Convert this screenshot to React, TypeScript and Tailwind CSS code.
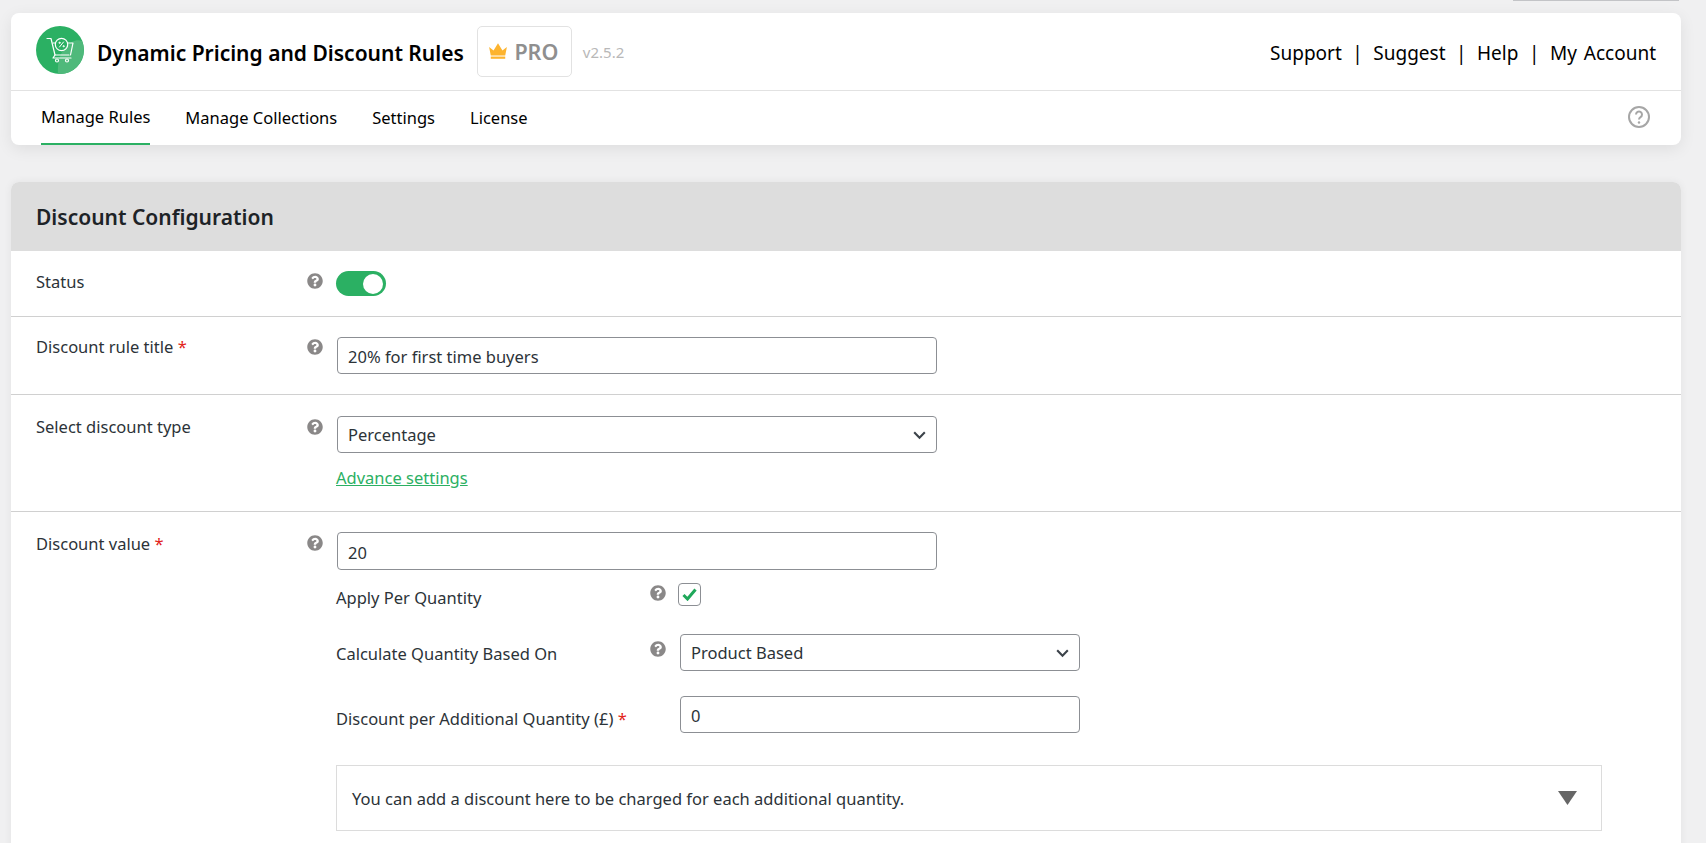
import { FaQuestionCircle } from "react-icons/fa";

function Help() {
  return <FaQuestionCircle className="w-4 h-4 text-[#8a8888] shrink-0" />;
}

function Chevron() {
  return (
    <svg viewBox="0 0 16 16" className="absolute right-[9px] top-1/2 -translate-y-1/2 w-[17px] h-[17px] pointer-events-none">
      <path d="M3 5.5 8 10.5 13 5.5" fill="none" stroke="#3c434a" strokeWidth="2" />
    </svg>
  );
}

function TextBox({ value, className }: { value: string; className: string }) {
  return (
    <input
      readOnly
      value={value}
      className={`border border-[#8c8f94] rounded-[4px] bg-white px-[10px] pt-[2px] text-[16.5px] text-[#2c3338] outline-none ${className}`}
    />
  );
}

function SelectBox({ value, className }: { value: string; className: string }) {
  return (
    <div className={`relative ${className}`}>
      <select className="appearance-none w-full h-full border border-[#8c8f94] rounded-[4px] bg-white pl-[10px] pr-[10px] pt-[2px] text-[16.5px] text-[#2c3338] outline-none">
        <option>{value}</option>
      </select>
      <Chevron />
    </div>
  );
}

function Logo() {
  return (
    <svg viewBox="0 0 48 48" className="w-12 h-12 shrink-0">
      <circle cx="24" cy="24" r="24" fill="#2bb063" />
      <path d="M24 48a24 24 0 0 0 22-33C38 11 20 22 22 48z" fill="#4fb97b" />
      <g fill="none" stroke="#fff" strokeWidth="1.200" strokeLinecap="round" strokeLinejoin="round">
        <path d="M11 12.500h4l4 16.500h14" />
        <path d="M17 17h2M32 17h5l-2.500 12" />
        <path d="M19 29 17 32h18" />
        <circle cx="25.500" cy="18.500" r="6.200" />
        <circle cx="21" cy="34.500" r="1.500" />
        <circle cx="31" cy="34.500" r="1.500" />
        <path d="M23.500 21 27.500 16" strokeWidth="1" />
        <circle cx="23.500" cy="16.800" r=".6" strokeWidth="1" />
        <circle cx="27.500" cy="20.200" r=".6" strokeWidth="1" />
      </g>
    </svg>
  );
}

function Crown() {
  return (
    <svg viewBox="0 0 18 16" className="w-5 h-[18px] shrink-0 mb-[2px]">
      <path d="M1 4.500 5 7.500 9 1l4 6.500 4-3-1.500 7.500h-13z" fill="#fdb42f" />
      <rect x="2.500" y="13" width="13" height="2" fill="#fdb42f" />
    </svg>
  );
}

export default function App() {
  return (
    <div className="h-[843px] overflow-hidden bg-[#f0f0f1] font-['Noto_Sans',sans-serif] text-[16.5px] text-[#2c3338]">
      {/* --- top sliver of the screen options tab --- */}
      <div className="flex justify-end pr-[27px]">
        <div className="w-[166px] h-[1px] bg-[#c3c4c7]" />
      </div>

      <div className="ml-[11px] mr-[25px] mt-[12px] h-[132px] bg-white rounded-[8px] shadow-[0_4px_16px_rgba(0,0,0,0.08)]">
        <div className="h-[78px] border-b border-[#e2e2e2] pl-[25px] pr-[25px] pt-[13px] flex items-start justify-between">
          <div className="flex items-start">
            <Logo />
            <span className="ml-[13px] h-[51px] pt-[4px] flex items-center text-[21px] font-semibold text-black">Dynamic Pricing and Discount Rules</span>
            <div className="ml-[13px] w-[95px] h-[51px] border border-[#e2e2e2] rounded-[5px] pr-[2px] flex items-center justify-center gap-[6px]">
              <Crown />
              <span className="pt-[2px] text-[21.5px] font-semibold text-[#8f8f8f]">PRO</span>
            </div>
            <span className="ml-[11px] h-[51px] pt-[1px] flex items-center text-[15px] text-[#b8b8b8]">v2.5.2</span>
          </div>
          <div className="h-[51px] pt-[3px] flex items-center text-[19px] text-black">
            <span>Support</span>
            <span className="mx-[10.5px]">|</span>
            <span>Suggest</span>
            <span className="mx-[10.5px]">|</span>
            <span>Help</span>
            <span className="mx-[10.5px]">|</span>
            <span className="[word-spacing:2px]">My Account</span>
          </div>
        </div>
        <div className="h-[54px] pl-[30px] pr-[31px] flex items-stretch justify-between text-black">
          <div className="flex gap-[35px]">
            <span className="flex items-center border-b-2 border-[#2bb063]">Manage Rules</span>
            <span className="flex items-center">Manage Collections</span>
            <span className="flex items-center">Settings</span>
            <span className="flex items-center">License</span>
          </div>
          <div className="flex items-center pb-[3px]">
            <svg viewBox="0 0 22 22" className="w-[22px] h-[22px]">
              <circle cx="11" cy="11" r="10" fill="none" stroke="#a6a6a6" strokeWidth="2" />
              <path d="M8 8.500a3 3 0 1 1 4.500 2.600c-1 .6-1.500 1.100-1.500 2.400" fill="none" stroke="#a6a6a6" strokeWidth="2" />
              <circle cx="11" cy="16.500" r="1.200" fill="#a6a6a6" />
            </svg>
          </div>
        </div>
      </div>

      <div className="ml-[11px] mr-[25px] mt-[37px] bg-white rounded-t-[8px] shadow-[0_0_8px_rgba(0,0,0,0.06)]">
        <div className="h-[69px] bg-[#dddddd] rounded-t-[8px] pl-[25px] pt-[2px] flex items-center">
          <h2 className="text-[21px] font-semibold text-[#1d2327]">Discount Configuration</h2>
        </div>

        <div className="h-[66px] border-b border-[#d0d0d0] pl-[25px] flex items-start">
          <span className="w-[271px] pt-[19px]">Status</span>
          <div className="pt-[22px]"><Help /></div>
          <div className="ml-[13px] pt-[20px]">
            <div className="w-[50px] h-[25px] rounded-full bg-[#2bb063] flex items-center justify-end pr-[3px]">
              <div className="w-[20px] h-[20px] rounded-full bg-white" />
            </div>
          </div>
        </div>

        <div className="h-[78px] border-b border-[#d0d0d0] pl-[25px] flex items-start">
          <span className="w-[271px] pt-[18px]">Discount rule title <span className="text-[#e2231a]">*</span></span>
          <div className="pt-[22px]"><Help /></div>
          <TextBox value="20% for first time buyers" className="ml-[14px] mt-[20px] w-[600px] h-[37px]" />
        </div>

        <div className="h-[117px] border-b border-[#d0d0d0] pl-[25px] flex items-start">
          <span className="w-[271px] pt-[20px]">Select discount type</span>
          <div className="pt-[24px]"><Help /></div>
          <div className="ml-[14px] pt-[21px]">
            <SelectBox value="Percentage" className="w-[600px] h-[37px]" />
            <a className="block -ml-[1px] mt-[13px] text-[#2bb063] underline">Advance settings</a>
          </div>
        </div>

        <div className="pl-[25px] pb-[40px] flex items-start">
          <span className="w-[271px] pt-[20px]">Discount value <span className="text-[#e2231a]">*</span></span>
          <div className="pt-[23px]"><Help /></div>
          <div className="ml-[13px] pt-[20px] flex flex-col">
            <TextBox value="20" className="ml-[1px] w-[600px] h-[38px]" />

            <div className="mt-[13px] h-[23px] flex items-start">
              <span className="w-[314px] pt-[3px]">Apply Per Quantity</span>
              <div className="pt-[2px]"><Help /></div>
              <div className="ml-[12px] w-[23px] h-[23px] border border-[#8c8f94] rounded-[4px] flex items-center justify-center">
                <svg viewBox="0 0 15 13" className="w-[15px] h-[13px]">
                  <path d="M1.500 7 5.500 11 13.500 1.500" fill="none" stroke="#1fa85a" strokeWidth="3" />
                </svg>
              </div>
            </div>

            <div className="mt-[28px] h-[37px] flex items-start">
              <span className="w-[314px] pt-[8px]">Calculate Quantity Based On</span>
              <div className="pt-[7px]"><Help /></div>
              <SelectBox value="Product Based" className="ml-[14px] w-[400px] h-[37px]" />
            </div>

            <div className="mt-[25px] h-[37px] flex items-start">
              <span className="w-[344px] pt-[11px]">Discount per Additional Quantity (£) <span className="text-[#e2231a]">*</span></span>
              <TextBox value="0" className="w-[400px] h-[37px]" />
            </div>

            <div className="mt-[32px] w-[1266px] h-[66px] border border-[#dcdcdc] pl-[15px] pr-[24px] pt-[2px] flex items-center justify-between">
              <span>You can add a discount here to be charged for each additional quantity.</span>
              <svg viewBox="0 0 19 14" className="w-[19px] h-[14px] mb-[3px]">
                <path d="M0 0h19L9.500 14z" fill="#666666" />
              </svg>
            </div>
          </div>
        </div>
      </div>
    </div>
  );
}
